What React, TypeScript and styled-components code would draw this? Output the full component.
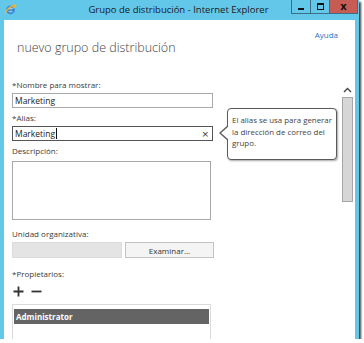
import React from 'react';
import styled, { createGlobalStyle } from 'styled-components';

const GlobalStyle = createGlobalStyle`
  html, body {
    margin: 0;
    padding: 0;
    background: #ffffff;
    font-family: "Open Sans", "Noto Sans", sans-serif;
  }
`;

const Frame = styled.div`
  width: 359px;
  height: 339px;
  background: #63c7ea;
  box-shadow: 2px 2px 2px rgba(0, 0, 0, 0.75);
  display: flex;
  flex-direction: column;
  overflow: hidden;
`;

const TitleBar = styled.div`
  height: 20px;
  display: flex;
  align-items: flex-start;
`;

const AppIcon = styled.svg`
  margin: 3px 0 0 4px;
  width: 13px;
  height: 13px;
`;

const Title = styled.div`
  flex: 1;
  text-align: center;
  font-size: 9.5px;
  line-height: 20px;
  color: #1a1a1a;
  padding-left: 48px;
`;

const Controls = styled.div`
  display: flex;
  margin-right: 1px;
`;

const CtrlButton = styled.div<{ $close?: boolean }>`
  width: ${p => (p.$close ? '29px' : '20px')};
  height: 14px;
  box-sizing: border-box;
  border: 1px solid #3c6f85;
  border-top: none;
  margin-left: -1px;
  background: ${p => (p.$close ? '#c75c55' : '#63c7ea')};
  display: flex;
  align-items: center;
  justify-content: center;
  font-size: 10px;
  font-weight: bold;
  color: #111;
  font-family: "DejaVu Sans", sans-serif;
`;

const MinGlyph = styled.div`
  width: 6px;
  height: 2px;
  background: #111;
  margin-top: 4px;
`;

const MaxGlyph = styled.div`
  width: 5px;
  height: 4px;
  border: 1.5px solid #111;
  border-top-width: 2px;
`;

const Body = styled.div`
  flex: 1;
  margin: 0 4px;
  background: #ffffff;
  display: flex;
  position: relative;
`;

const Content = styled.div`
  flex: 1;
  padding-left: 8px;
  display: flex;
  flex-direction: column;
`;

const HelpRow = styled.div`
  display: flex;
  justify-content: flex-end;
  padding: 9px 3px 0 0;
  height: 12px;
`;

const HelpLink = styled.a`
  font-size: 8px;
  color: #1f73c4;
  text-decoration: none;
`;

const Heading = styled.div`
  font-size: 12.5px;
  font-weight: 300;
  color: #444;
  margin: -1px 0 0 5px;
  line-height: 16px;
`;

const Label = styled.div<{ $top: number }>`
  font-size: 8px;
  color: #3a3a3a;
  line-height: 10px;
  margin-top: ${p => p.$top}px;
`;

const TextBox = styled.div<{ $focused?: boolean }>`
  width: 201px;
  height: 15px;
  box-sizing: border-box;
  border: 1px solid ${p => (p.$focused ? '#555' : '#a8a8a8')};
  margin-top: 3px;
  display: flex;
  align-items: center;
  padding: 0 3px 0 2px;
  font-size: 8.5px;
  color: #222;
`;

const Value = styled.span`
  flex: 1;
  display: flex;
  align-items: center;
`;

const Caret = styled.span`
  display: inline-block;
  width: 1px;
  height: 11px;
  background: #111;
  margin-left: 1px;
`;

const ClearX = styled.span`
  font-size: 9px;
  color: #333;
  font-family: "DejaVu Sans", sans-serif;
`;

const TextArea = styled.div`
  width: 199px;
  height: 59px;
  box-sizing: border-box;
  border: 1px solid #a8a8a8;
  margin-top: 5px;
`;

const OuRow = styled.div`
  display: flex;
  gap: 3px;
  margin-top: 3px;
`;

const DisabledBox = styled.div`
  width: 110px;
  height: 16px;
  background: #e4e4e4;
  border: 1px solid #dcdcdc;
  box-sizing: border-box;
`;

const BrowseButton = styled.div`
  width: 89px;
  height: 16px;
  box-sizing: border-box;
  background: #f4f4f4;
  border: 1px solid #c3c3c3;
  font-size: 8px;
  color: #333;
  display: flex;
  align-items: center;
  justify-content: center;
`;

const IconRow = styled.div`
  display: flex;
  gap: 7px;
  margin: 7px 0 0 1px;
  align-items: center;
`;

const ListBox = styled.div`
  width: 199px;
  flex: 1;
  margin-top: 7px;
  border: 1px solid #dadada;
  border-bottom: none;
  padding: 4px 1px 0 1px;
  box-sizing: border-box;
`;

const ListHeader = styled.div`
  height: 15px;
  background: #646464;
  color: #fff;
  font-size: 8px;
  font-weight: bold;
  line-height: 15px;
  padding-left: 2px;
`;

const Tooltip = styled.div`
  position: absolute;
  left: 223px;
  top: 88px;
  width: 110px;
  height: 52px;
  box-sizing: border-box;
  border: 1px solid #5a5a5a;
  border-radius: 4px;
  background: #fff;
  box-shadow: 1px 1px 2px rgba(0, 0, 0, 0.35);
  padding: 6px 3px 0 4px;
  font-size: 7.9px;
  line-height: 11.5px;
  color: #444;

  &::before {
    content: '';
    position: absolute;
    left: -9px;
    top: 16px;
    width: 0;
    height: 0;
    border-top: 8px solid transparent;
    border-bottom: 8px solid transparent;
    border-right: 9px solid #5a5a5a;
  }

  &::after {
    content: '';
    position: absolute;
    left: -7px;
    top: 17px;
    width: 0;
    height: 0;
    border-top: 7px solid transparent;
    border-bottom: 7px solid transparent;
    border-right: 8px solid #fff;
  }
`;

const ScrollCol = styled.div`
  width: 12px;
  margin-right: 2px;
  display: flex;
  flex-direction: column;
  align-items: center;
  padding-top: 67px;
`;

const ScrollThumb = styled.div`
  width: 11px;
  height: 105px;
  margin-top: 4px;
  box-sizing: border-box;
  background: #d6d6d6;
  border: 1px solid #a6a6a6;
`;

function Window() {
  return (
    <Frame>
      <TitleBar>
        <AppIcon viewBox="0 0 16 16">
          <circle cx="8" cy="8.5" r="5.5" fill="#3f8fd8" />
          <circle cx="8" cy="8.5" r="3" fill="#9fd0f2" />
          <rect x="4" y="8" width="8" height="1.4" fill="#1f6fc0" />
          <path d="M2 13 C1 11 8 3 14 2.5 C15.5 2.5 13 5 11 6.5" stroke="#f0b429" strokeWidth="1.8" fill="none" />
        </AppIcon>
        <Title>Grupo de distribución - Internet Explorer</Title>
        <Controls>
          <CtrlButton><MinGlyph /></CtrlButton>
          <CtrlButton><MaxGlyph /></CtrlButton>
          <CtrlButton $close>x</CtrlButton>
        </Controls>
      </TitleBar>
      <Body>
        <Content>
          <HelpRow>
            <HelpLink>Ayuda</HelpLink>
          </HelpRow>
          <Heading>nuevo grupo de distribución</Heading>
          <Label $top={24}>*Nombre para mostrar:</Label>
          <TextBox>
            <Value>Marketing</Value>
          </TextBox>
          <Label $top={5}>*Alias:</Label>
          <TextBox $focused>
            <Value>
              Marketing
              <Caret />
            </Value>
            <ClearX>×</ClearX>
          </TextBox>
          <Label $top={5}>Descripción:</Label>
          <TextArea />
          <Label $top={9}>Unidad organizativa:</Label>
          <OuRow>
            <DisabledBox />
            <BrowseButton>Examinar...</BrowseButton>
          </OuRow>
          <Label $top={11}>*Propietarios:</Label>
          <IconRow>
            <svg width="11" height="11" viewBox="0 0 11 11">
              <path d="M5.5 0.5 V10.5 M0.5 5.5 H10.5" stroke="#333" strokeWidth="1.8" />
            </svg>
            <svg width="11" height="11" viewBox="0 0 11 11">
              <path d="M0.5 5.5 H10.5" stroke="#333" strokeWidth="1.8" />
            </svg>
          </IconRow>
          <ListBox>
            <ListHeader>Administrator</ListHeader>
          </ListBox>
        </Content>
        <ScrollCol>
          <svg width="9" height="6" viewBox="0 0 9 6">
            <path d="M1 5 L4.5 1.5 L8 5" stroke="#444" strokeWidth="1.4" fill="none" />
          </svg>
          <ScrollThumb />
        </ScrollCol>
        <Tooltip>
          El alias se usa para generar la dirección de correo del grupo.
        </Tooltip>
      </Body>
    </Frame>
  );
}

export default function App() {
  return (
    <>
      <GlobalStyle />
      <Window />
    </>
  );
}
